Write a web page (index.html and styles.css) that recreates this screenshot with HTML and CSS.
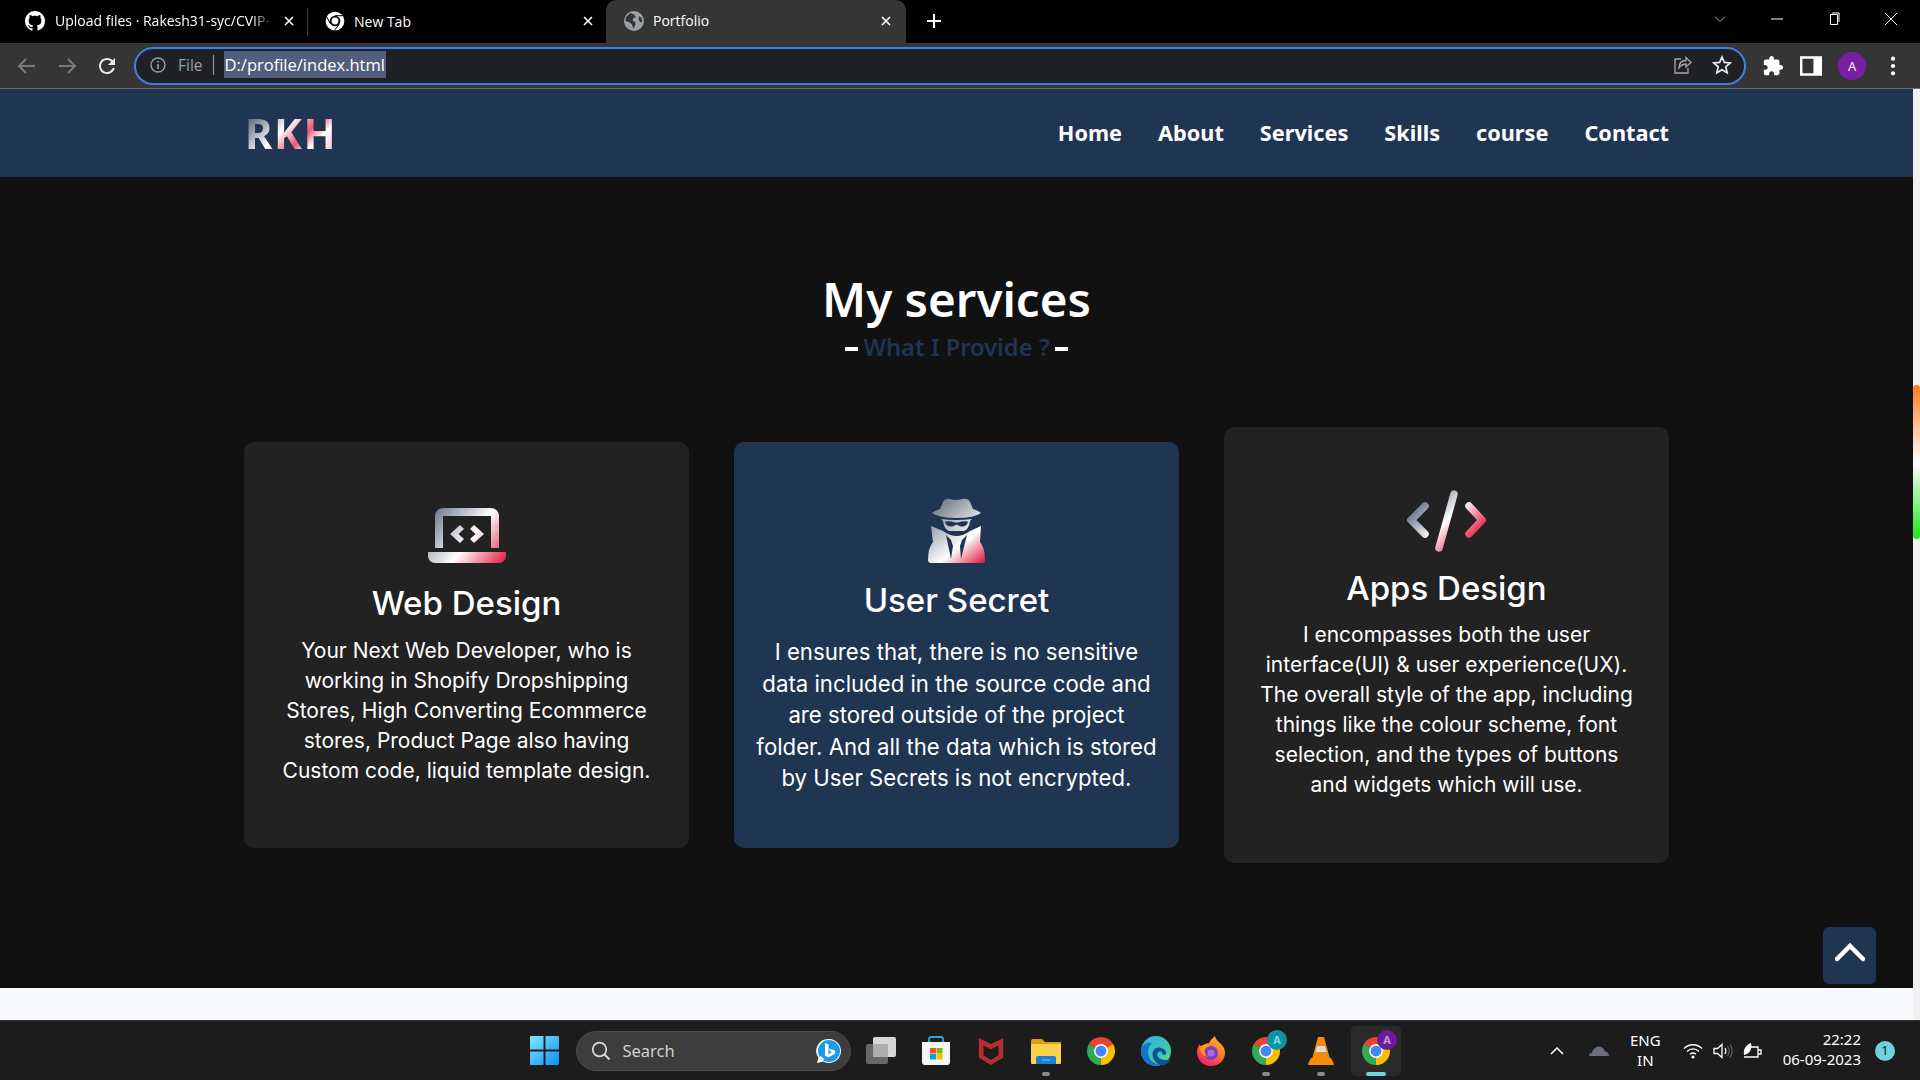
FILE: index.html
```html
<!DOCTYPE html>
<html lang="en">
<head>
    <title>Portfolio</title>
    <meta charset="utf-8" />
    <link rel="stylesheet" href="styles.css">
</head>
<body>
    <svg class="sprite" xmlns="http://www.w3.org/2000/svg">
        <symbol id="chrome" viewBox="0 0 32 32">
            <path fill="#ea4335" d="M3.01 8.5A15 15 0 0 1 28.99 8.5L16 16z"/>
            <path fill="#fbbc04" d="M28.99 8.5A15 15 0 0 1 16 31L16 16z"/>
            <path fill="#34a853" d="M16 31A15 15 0 0 1 3.01 8.5L16 16z"/>
            <circle cx="16" cy="16" r="7.4" fill="#fff"/>
            <circle cx="16" cy="16" r="5.8" fill="#4285f4"/>
        </symbol>
        <symbol id="close" viewBox="0 0 12 12">
            <path d="M2 2l8 8M10 2l-8 8" stroke="#fff" stroke-width="1.6" fill="none"/>
        </symbol>
    </svg>

    <!-- browser tabs -->
    <div class="tabstrip">
        <div class="tab">
            <svg class="favicon" viewBox="0 0 16 16"><path fill="#fff" d="M8 0C3.58 0 0 3.58 0 8c0 3.54 2.29 6.53 5.47 7.59.4.07.55-.17.55-.38 0-.19-.01-.82-.01-1.49-2.01.37-2.53-.49-2.69-.94-.09-.23-.48-.94-.82-1.13-.28-.15-.68-.52-.01-.53.63-.01 1.08.58 1.23.82.72 1.21 1.87.87 2.33.66.07-.52.28-.87.51-1.07-1.78-.2-3.64-.89-3.64-3.95 0-.87.31-1.59.82-2.15-.08-.2-.36-1.02.08-2.12 0 0 .67-.21 2.2.82.64-.18 1.32-.27 2-.27.68 0 1.36.09 2 .27 1.53-1.04 2.2-.82 2.2-.82.44 1.1.16 1.92.08 2.12.51.56.82 1.27.82 2.15 0 3.07-1.87 3.75-3.65 3.95.29.25.54.73.54 1.48 0 1.07-.01 1.93-.01 2.2 0 .21.15.46.55.38A8.013 8.013 0 0016 8c0-4.42-3.58-8-8-8z"/></svg>
            <span class="tab-title tab-fade">Upload files · Rakesh31-syc/CVIP-</span>
            <svg class="tab-close"><use href="#close"/></svg>
        </div>
        <div class="tab tab-second">
            <svg class="favicon" viewBox="0 0 32 32">
                <circle cx="16" cy="16" r="15" fill="#fff"/>
                <circle cx="16" cy="16" r="8.5" fill="#000"/>
                <circle cx="16" cy="16" r="5.5" fill="#fff"/>
                <path d="M16 7.5H30M8.6 20.5L2.5 9M22.8 21L15 31" stroke="#000" stroke-width="1.6"/>
            </svg>
            <span class="tab-title">New Tab</span>
            <svg class="tab-close"><use href="#close"/></svg>
        </div>
        <div class="tab tab-active">
            <svg class="favicon" viewBox="0 0 16 16">
                <circle cx="8" cy="8" r="8" fill="#9aa0a6"/>
                <path fill="#353535" d="M5 1.6l3 1.2 1.4 2-2 .9-.4 2 2.2 1.3-.3 2.8-1.6 2.2-1-3.4-2.4-1.8-2.7-.6.4-3.4zM12 4l2 1.600.6 3-1.800.4-1-2z"/>
            </svg>
            <span class="tab-title">Portfolio</span>
            <svg class="tab-close"><use href="#close"/></svg>
        </div>
        <svg class="new-tab" viewBox="0 0 14 14"><path d="M7 0v14M0 7h14" stroke="#fff" stroke-width="2"/></svg>
        <div class="window-controls">
            <svg class="win-btn" viewBox="0 0 14 14"><path d="M2 4.500l5 5 5-5" stroke="#aaa" fill="none"/></svg>
            <svg class="win-btn" viewBox="0 0 14 14"><path d="M1 7h12" stroke="#fff"/></svg>
            <svg class="win-btn" viewBox="0 0 14 14"><path d="M3.500 2.500h7v10h-7zM5 1h7v9" stroke="#fff" fill="none"/></svg>
            <svg class="win-btn" viewBox="0 0 14 14"><path d="M1 1l12 12M13 1L1 13" stroke="#fff" fill="none"/></svg>
        </div>
    </div>

    <!-- address bar -->
    <div class="toolbar">
        <svg class="tool-icon" viewBox="0 0 24 24"><path d="M20 12H5M11 5l-7 7 7 7" stroke="#7b7b7b" stroke-width="2" fill="none"/></svg>
        <svg class="tool-icon" viewBox="0 0 24 24"><path d="M4 12h15M13 5l7 7-7 7" stroke="#7b7b7b" stroke-width="2" fill="none"/></svg>
        <svg class="tool-icon" viewBox="0 0 24 24"><path fill="#e8eaed" d="M17.650 6.350C16.200 4.900 14.210 4 12 4c-4.420 0-7.990 3.580-7.990 8s3.570 8 7.990 8c3.730 0 6.840-2.550 7.730-6h-2.080c-.82 2.330-3.040 4-5.650 4-3.310 0-6-2.690-6-6s2.690-6 6-6c1.660 0 3.140.69 4.220 1.780L13 11h7V4l-2.350 2.350z"/></svg>
        <div class="omnibox">
            <svg class="info-icon" viewBox="0 0 16 16"><circle cx="8" cy="8" r="7" stroke="#9aa0a6" stroke-width="1.400" fill="none"/><path d="M8 7v5M8 4v1.600" stroke="#9aa0a6" stroke-width="1.600"/></svg>
            <span class="scheme">File</span>
            <span class="omni-sep"></span>
            <span class="url">D:/profile/index.html</span>
            <svg class="omni-action omni-share" viewBox="0 0 20 20"><path d="M9 4H3v14h13v-5M7 13c0-5 3-7.500 7-7.500V2.500l5 5-5 4.500V9c-3 0-5 1-7 4z" stroke="#a8a8a8" stroke-width="1.300" fill="none"/></svg>
            <svg class="omni-action" viewBox="0 0 20 20"><path d="M10 2l2.400 5.400 5.800.6-4.400 3.900 1.300 5.800L10 14.700l-5.100 3 1.300-5.800L1.800 8l5.800-.6z" stroke="#e8eaed" stroke-width="1.700" fill="none"/></svg>
        </div>
        <div class="toolbar-right">
            <svg class="ext-icon" viewBox="0 0 24 24"><path fill="#fff" d="M20.500 11H19V7c0-1.100-.9-2-2-2h-4V3.500C13 2.120 11.880 1 10.500 1S8 2.120 8 3.500V5H4c-1.100 0-1.990.9-1.990 2v3.800H3.500c1.490 0 2.700 1.210 2.700 2.700s-1.210 2.700-2.700 2.700H2V20c0 1.100.9 2 2 2h3.800v-1.500c0-1.490 1.210-2.700 2.700-2.700 1.490 0 2.700 1.210 2.700 2.700V22H17c1.100 0 2-.9 2-2v-4h1.500c1.380 0 2.500-1.120 2.500-2.500S21.880 11 20.500 11z"/></svg>
            <svg class="ext-icon" viewBox="0 0 18 18"><path fill="#fff" fill-rule="evenodd" d="M0 1h18v16H0zM2 3v12h9V3z"/></svg>
            <span class="avatar">A</span>
            <svg class="ext-icon" viewBox="0 0 18 18"><circle cx="9" cy="3" r="1.700" fill="#fff"/><circle cx="9" cy="9" r="1.700" fill="#fff"/><circle cx="9" cy="15" r="1.700" fill="#fff"/></svg>
        </div>
    </div>

    <div class="viewport">
        <div class="page">
            <nav class="navbar">
                <a class="logo">RKH</a>
                <ul class="menu">
                    <li>Home</li>
                    <li>About</li>
                    <li>Services</li>
                    <li>Skills</li>
                    <li>course</li>
                    <li>Contact</li>
                </ul>
            </nav>

            <section class="services">
                <h2 class="title">My services</h2>
                <p class="subtitle"><span class="dash"></span>What I Provide ?<span class="dash"></span></p>

                <div class="cards">
                    <div class="card card-web">
                        <svg class="icon-web" viewBox="0 0 78 55">
                            <defs><linearGradient id="grad-web" gradientUnits="userSpaceOnUse" x1="4" y1="0" x2="74" y2="56"><stop offset="0" stop-color="#657084"/><stop offset=".55" stop-color="#fff"/><stop offset="1" stop-color="#e5234c"/></linearGradient></defs>
                            <path fill="url(#grad-web)" fill-rule="evenodd" d="M7 40V8a8 8 0 0 1 8-8h48a8 8 0 0 1 8 8v32h-8V8H15v32zM0 44h78v4a7 7 0 0 1-7 7H7a7 7 0 0 1-7-7zM32 17l4 4-5.500 5 5.500 5-4 4-10-9zM46 17l10 9-10 9-4-4 5.500-5-5.500-5z"/>
                        </svg>
                        <h3 class="card-title">Web Design</h3>
                        <p class="card-text">Your Next Web Developer, who is<br>working in Shopify Dropshipping<br>Stores, High Converting Ecommerce<br>stores, Product Page also having<br>Custom code, liquid template design.</p>
                    </div>

                    <div class="card card-secret">
                        <svg class="icon-secret" viewBox="0 0 57 65">
                            <defs><linearGradient id="grad-secret" gradientUnits="userSpaceOnUse" x1="6" y1="6" x2="54" y2="64"><stop offset="0" stop-color="#6a7587"/><stop offset=".65" stop-color="#fff"/><stop offset="1" stop-color="#e5234c"/></linearGradient></defs>
                            <path fill="url(#grad-secret)" fill-rule="evenodd" d="M15 4Q17 0 22 1Q28 3 34 1Q40 0 42 4L45 11Q51 13 53 15Q46 20 28.500 20Q11 20 4 15Q6 13 12 11zM13 21Q28 23 44 21L42 23Q41 31 36 33H21Q16 31 15 23zM17 23.500Q22 22.500 27 24.500H30Q35 22.500 40 23.500Q39 29 33 28.500Q30 27.500 28.500 26.500Q27 27.500 24 28.500Q18 29 17 23.500zM3 28L15 33Q22 38 28.500 38Q35 38 42 33L53 28L52 44Q57 50 57 62Q57 65 54 65H3Q0 65 0 62Q0 50 5 44zM18 37L23 61L25 48L23 42zM39 37L34 42L32 48L33 61z"/>
                        </svg>
                        <h3 class="card-title">User Secret</h3>
                        <p class="card-text">I ensures that, there is no sensitive<br>data included in the source code and<br>are stored outside of the project<br>folder. And all the data which is stored<br>by User Secrets is not encrypted.</p>
                    </div>

                    <div class="card card-apps">
                        <svg class="icon-apps" viewBox="0 0 79 62">
                            <defs><linearGradient id="grad-apps" gradientUnits="userSpaceOnUse" x1="10" y1="5" x2="65" y2="60"><stop offset=".1" stop-color="#6a7587"/><stop offset=".5" stop-color="#fff"/><stop offset=".85" stop-color="#ec3f63"/></linearGradient></defs>
                            <path d="M18 16L4 30l14 14M47 4L32 58M62 16l13 14-13 14" fill="none" stroke="url(#grad-apps)" stroke-width="7.500" stroke-linecap="round" stroke-linejoin="miter"/>
                        </svg>
                        <h3 class="card-title">Apps Design</h3>
                        <p class="card-text">I encompasses both the user<br>interface(UI) &amp; user experience(UX).<br>The overall style of the app, including<br>things like the colour scheme, font<br>selection, and the types of buttons<br>and widgets which will use.</p>
                    </div>
                </div>
            </section>

            <div class="page-strip"></div>

            <a class="to-top"><svg viewBox="0 0 30 20"><path d="M2 17L15 4l13 13" stroke="#fff" stroke-width="4.500" fill="none" stroke-linecap="round"/></svg></a>
        </div>
        <div class="scrollbar"><div class="scroll-thumb"></div></div>
    </div>

    <!-- windows taskbar -->
    <div class="taskbar">
        <div class="task-spacer"></div>
        <div class="task-apps">
            <span class="task-item">
                <svg class="app-start" viewBox="0 0 30 30">
                    <defs><linearGradient id="grad-win" x1="0" y1="0" x2="1" y2="1"><stop offset="0" stop-color="#7fe9ff"/><stop offset="1" stop-color="#0b8ff0"/></linearGradient></defs>
                    <path fill="url(#grad-win)" d="M0 1a1 1 0 0 1 1-1h13v14H0zM16 0h13a1 1 0 0 1 1 1v13H16zM0 16h14v14H1a1 1 0 0 1-1-1zM16 16h14v13a1 1 0 0 1-1 1H16z"/>
                </svg>
            </span>
            <div class="search-pill">
                <svg class="search-icon" viewBox="0 0 20 20"><circle cx="8.500" cy="8.500" r="6.800" stroke="#ddd" stroke-width="1.700" fill="none"/><path d="M13.500 13.500l5 5" stroke="#ddd" stroke-width="1.900"/></svg>
                <span class="search-text">Search</span>
                <svg class="bing-icon" viewBox="0 0 26 26">
                    <path fill="#fff" d="M13 1a12 12 0 1 1-6 22.400L1 25l1.500-5A12 12 0 0 1 13 1z"/>
                    <circle cx="13" cy="13" r="11" fill="#1b9ae8"/>
                    <path fill="#fff" d="M1.500 24l3-6 4 3z"/>
                    <path fill="#fff" d="M9 5l3.500 1.200v10l3.500-2-2-1-1-2.800 6 2.200v3.200l-6.500 3.800L9 17.800z"/>
                </svg>
            </div>
            <span class="task-item">
                <svg class="app-icon" viewBox="0 0 30 30">
                    <rect x="0" y="8" width="22" height="20" rx="2" fill="#676767"/>
                    <rect x="7" y="1" width="23" height="20" rx="2" fill="#e6e6e6" fill-opacity=".92"/>
                    <rect x="7" y="8" width="15" height="13" fill="#adadad"/>
                </svg>
            </span>
            <span class="task-item">
                <svg class="app-icon" viewBox="0 0 30 30">
                    <path d="M8 6V3a2 2 0 0 1 2-2h10a2 2 0 0 1 2 2v3" fill="none" stroke="#2aa5df" stroke-width="1.800"/>
                    <path fill="#f5f5f5" d="M1 6h28v20a3 3 0 0 1-3 3H4a3 3 0 0 1-3-3z"/>
                    <rect x="9" y="12" width="6" height="5.500" fill="#f25022"/>
                    <rect x="15.500" y="12" width="6" height="5.500" fill="#7fba00"/>
                    <rect x="9" y="18" width="6" height="5.500" fill="#00a4ef"/>
                    <rect x="15.500" y="18" width="6" height="5.500" fill="#ffb900"/>
                </svg>
            </span>
            <span class="task-item">
                <svg class="app-icon" viewBox="0 0 30 32"><path fill="#b52f2f" fill-rule="evenodd" d="M2 2l13 6.500L28 2v21l-13 8-13-8zM7 10v10.500l8 5 8-5V10l-8 4z"/></svg>
            </span>
            <span class="task-item task-running">
                <svg class="app-icon" viewBox="0 0 30 30">
                    <path fill="#d9a20b" d="M0 5a2 2 0 0 1 2-2h9l3 3h16v6H0z"/>
                    <path fill="#fdd14e" d="M0 8h30v19a1 1 0 0 1-1 1H1a1 1 0 0 1-1-1z"/>
                    <path fill="#1c7ed6" d="M5 22a2 2 0 0 1 2-2h16a2 2 0 0 1 2 2v6H5z"/>
                    <path stroke="#7cc2f5" d="M11 24h8"/>
                </svg>
            </span>
            <span class="task-item"><svg class="app-icon"><use href="#chrome"/></svg></span>
            <span class="task-item">
                <svg class="app-icon" viewBox="0 0 30 30">
                    <defs><linearGradient id="grad-edge" x1="0" y1="0" x2="1" y2="1"><stop offset="0" stop-color="#2bb3e8"/><stop offset=".6" stop-color="#3cc4b0"/><stop offset="1" stop-color="#6fe36b"/></linearGradient></defs>
                    <circle cx="15" cy="15" r="15" fill="url(#grad-edge)"/>
                    <path fill="#1576c9" d="M0 15C0 9 6 6 11 7c-4 3-5 9-3 14 2 5 9 9 15 6-3 2-5 3-8 3C7 30 0 24 0 15z"/>
                    <path fill="#0f5394" d="M12 21c-2-5 2-11 8-9 4 1 6 4 5 6-1 1-3 1-4 0 1-2-1-3-3-2-3 1-2 6 2 7 4 2 8 1 10-1-2 5-6 8-10 7-4-1-7-4-8-8z"/>
                </svg>
            </span>
            <span class="task-item">
                <svg class="app-icon" viewBox="0 0 30 30">
                    <defs><linearGradient id="grad-fox" x1=".8" y1="0" x2=".2" y2="1"><stop offset="0" stop-color="#ffc01f"/><stop offset=".5" stop-color="#ff6b2c"/><stop offset="1" stop-color="#f0196b"/></linearGradient></defs>
                    <path fill="url(#grad-fox)" d="M15 30C7 30 1 24 1 16c0-3 1-6 3-8 0 2 1 3 2 3 2-3 4-4 7-4 1-3 4-5 6-7 0 3 3 5 6 8 3 3 4 6 4 9 0 7-6 13-14 13z"/>
                    <circle cx="15" cy="17" r="7" fill="#7b3fc4"/>
                    <circle cx="15" cy="17" r="3.500" fill="#b565e0"/>
                    <path fill="#ff9a1f" d="M4 11c3-3 8-3 11-1-3 0-5 1-6 3-1 3 0 6 3 8-5-1-8-5-8-10z"/>
                </svg>
            </span>
            <span class="task-item task-running">
                <span class="badge-wrap">
                    <svg class="app-icon"><use href="#chrome"/></svg>
                    <span class="profile-badge badge-teal">A</span>
                </span>
            </span>
            <span class="task-item task-running">
                <svg class="app-icon" viewBox="0 0 26 30">
                    <path fill="#f58a0b" d="M10 1h6l6 22h-18z"/>
                    <path fill="#dcdcdc" d="M9 10h8l1.500 6H7.500z"/>
                    <path fill="#f58a0b" d="M3 22h20l3 6a1 1 0 0 1-1 1H1a1 1 0 0 1-1-1z"/>
                </svg>
            </span>
            <span class="task-item task-active">
                <span class="badge-wrap">
                    <svg class="app-icon"><use href="#chrome"/></svg>
                    <span class="profile-badge badge-purple">A</span>
                </span>
            </span>
        </div>
        <div class="tray">
            <svg class="tray-caret" viewBox="0 0 14 8"><path d="M1 7l6-6 6 6" stroke="#fff" stroke-width="1.500" fill="none"/></svg>
            <svg class="tray-cloud" viewBox="0 0 20 10"><path fill="#6a7079" d="M0 10c0-2 1-3 3-3 1-4 4-6.500 7-6.500 3 0 5 2 6 5 2 0 4 2 4 4.500z"/></svg>
            <span class="lang">ENG<br>IN</span>
            <svg class="tray-icon" viewBox="0 0 20 16"><path d="M1 5.500c5-5 13-5 18 0M4 8.500c3.500-3.500 8.500-3.500 12 0M7 11.300c2-1.700 4-1.700 6 0" stroke="#fff" stroke-width="1.300" fill="none"/><circle cx="10" cy="14" r="1.500" fill="#fff"/></svg>
            <svg class="tray-icon" viewBox="0 0 20 16"><path d="M1 5.500h3.500L9 1.500v13l-4.500-4H1z" stroke="#fff" stroke-width="1.300" fill="none"/><path d="M12 5c1.200 2 1.200 4 0 6" stroke="#fff" stroke-width="1.200" fill="none"/><path d="M14.500 3c2 3 2 7 0 10M17 1.500c2.500 4 2.500 9 0 13" stroke="#666" stroke-width="1.100" fill="none"/></svg>
            <svg class="tray-icon" viewBox="0 0 20 16"><path d="M4 4h11v10H1" stroke="#fff" stroke-width="1.300" fill="none"/><path d="M15 7h3v4h-3" stroke="#fff" stroke-width="1.300" fill="none"/><path fill="#fff" d="M1 12C0 6 3 2 8 0c1 4 0 9-4 11z"/></svg>
            <span class="clock">22:22<br>06-09-2023</span>
            <span class="notify">1</span>
        </div>
    </div>
</body>
</html>
```

FILE: styles.css
```css
* { box-sizing: border-box; }
html, body { margin: 0; padding: 0; }
body { width: 1920px; height: 1080px; overflow: hidden; display: flex; flex-direction: column; background: #111; font-family: "Open Sans", sans-serif; }
.sprite { display: none; }

/* tabs */
.tabstrip { height: 43px; flex: none; background: #000; display: flex; align-items: center; padding-left: 8px; color: #fff; }
.tab { width: 299px; height: 43px; padding: 0 12px 2px 17px; display: flex; align-items: center; gap: 10px; font-size: 14px; }
.tab-second { border-left: 1px solid #3c3c3c; height: 28px; padding-bottom: 1px; gap: 9px; }
.tab-active { width: 300px; padding: 0 14px 2px 18px; gap: 9px; background: #353535; border-radius: 10px 10px 0 0; }
.favicon { width: 20px; height: 20px; flex: none; }
.tab-title { flex: 1; white-space: nowrap; overflow: hidden; }
.tab-fade { -webkit-mask-image: linear-gradient(to right, #000 90%, transparent); mask-image: linear-gradient(to right, #000 90%, transparent); }
.tab-close { width: 12px; height: 12px; flex: none; }
.new-tab { width: 14px; height: 14px; margin-left: 21px; margin-bottom: 2px; }
.window-controls { margin-left: auto; display: flex; gap: 43px; padding: 0 22px 6px 0; }
.win-btn { width: 14px; height: 14px; }

/* address bar */
.toolbar { height: 46px; flex: none; background: #353535; border-bottom: 1px solid #6d6d6d; display: flex; align-items: center; padding-left: 15px; gap: 16px; }
.tool-icon { width: 24px; height: 24px; flex: none; }
.omnibox { width: 1612px; height: 38px; margin-left: -1px; border: 2px solid #3f7fe6; border-radius: 19px; background: #202124; display: flex; align-items: center; padding: 0 12px 2px 14px; }
.info-icon { width: 16px; height: 16px; flex: none; }
.scheme { color: #9aa0a6; font-size: 15.5px; margin-left: 12px; }
.omni-sep { width: 1px; height: 20px; background: #9aa0a6; margin: 0 10px; }
.url { background: #515f7d; color: #fff; font-size: 16.5px; line-height: 27px; padding: 0 1px; }
.omni-action { width: 20px; height: 20px; margin-left: 20px; flex: none; }
.omni-share { margin-left: auto; }
.toolbar-right { display: flex; align-items: center; gap: 16px; }
.ext-icon { width: 22px; height: 22px; flex: none; }
.avatar { width: 28px; height: 28px; border-radius: 50%; background: #7b1fa2; color: #fff; font-size: 13px; display: flex; align-items: center; justify-content: center; }

/* page */
.viewport { height: 931px; flex: none; display: flex; }
.page { flex: 1; position: relative; display: flex; flex-direction: column; }
.scrollbar { width: 7px; background: #f1f1f1; padding-top: 296px; }
.scroll-thumb { height: 154px; border-radius: 4px; background: linear-gradient(#ff7a1a, #fff 50%, #1ae81a); }

.navbar { height: 88px; flex: none; background: #1f3552; display: flex; align-items: center; justify-content: space-between; padding: 0 244px 0 245px; }
.logo { font-family: "Noto Sans", sans-serif; font-size: 42px; font-weight: 700; letter-spacing: 1.5px; padding-bottom: 2px; background: linear-gradient(135deg, #6a7587 15%, #fff 42%, #ee5575 60%, #fff 72%, #f7c0cc 90%); -webkit-background-clip: text; background-clip: text; color: transparent; }
.menu { list-style: none; margin: 0; padding: 0 0 2px; display: flex; gap: 36px; }
.menu li { color: #fff; font-family: "Noto Sans", sans-serif; font-size: 21.7px; font-weight: 700; }

.services { flex: 1; background: #111; padding: 92px 244px 0; }
.title { margin: 0; text-align: center; color: #fff; font-family: "Noto Sans", sans-serif; font-size: 47.5px; font-weight: 600; line-height: 60px; }
.subtitle { margin: 0; display: flex; justify-content: center; align-items: center; gap: 5px; color: #1f3552; font-family: "Noto Sans", sans-serif; font-size: 23.7px; font-weight: 600; line-height: 36px; }
.dash { width: 13px; height: 4px; background: #fff; margin-top: 3px; }

.cards { margin-top: 62px; display: grid; grid-template-columns: repeat(3, 445px); column-gap: 45px; align-items: center; }
.card { background: #222; border-radius: 10px; text-align: center; color: #fff; display: flex; flex-direction: column; align-items: center; font-family: Inter, sans-serif; font-size: 21px; line-height: 30px; }
.card-title { margin: 0; font-size: 33px; font-weight: 500; line-height: 40px; }
.card-text { margin: 0; white-space: nowrap; }

.card-web { height: 406px; padding-top: 66px; }
.icon-web { width: 78px; height: 55px; margin-bottom: 20px; }
.card-web .card-title { margin-bottom: 13px; }

.card-secret { height: 406px; padding-top: 56px; background: #1f3552; font-size: 22.2px; line-height: 31.5px; }
.icon-secret { width: 57px; height: 65px; margin-bottom: 17px; }
.card-secret .card-title { margin-bottom: 16px; }

.card-apps { height: 436px; padding-top: 63px; }
.icon-apps { width: 79px; height: 62px; margin-bottom: 16px; }
.card-apps .card-title { margin-bottom: 12px; }

.page-strip { height: 32px; flex: none; background: #f8fafe; }
.to-top { position: absolute; right: 37px; bottom: 36px; width: 53px; height: 57px; background: #1f3552; border-radius: 6px; display: flex; align-items: center; justify-content: center; padding-bottom: 8px; }
.to-top svg { width: 30px; height: 20px; }

/* taskbar */
.taskbar { height: 60px; flex: 1; background: #1c1c1c; border-top: 1px solid #333; display: grid; grid-template-columns: 1fr auto 1fr; align-items: center; color: #fff; }
.task-apps { display: flex; align-items: center; }
.task-item { width: 55px; height: 50px; display: flex; align-items: center; justify-content: center; position: relative; border-radius: 5px; }
.task-running::after, .task-active::after { content: ""; position: absolute; bottom: 0; left: 50%; width: 8px; height: 4px; margin-left: -4px; border-radius: 2px; background: #8a8a8a; }
.task-active { width: 50px; margin: 0 2.5px; background: #2a2a2a; }
.task-active::after { width: 20px; margin-left: -10px; background: #6fd3dc; }
.app-start { width: 29px; height: 29px; }
.app-icon { width: 30px; height: 30px; display: block; }
.search-pill { width: 275px; height: 40px; margin: 0 3px 0 4px; border-radius: 20px; background: #3d3d3d; border: 1px solid #4a4a4a; display: flex; align-items: center; padding: 0 8px 0 14px; }
.search-icon { width: 20px; height: 20px; flex: none; }
.search-text { margin-left: 12px; color: #d0d0d0; font-family: "Noto Sans", sans-serif; font-size: 16.5px; flex: 1; }
.bing-icon { width: 26px; height: 26px; flex: none; }
.badge-wrap { position: relative; display: block; }
.profile-badge { position: absolute; top: -6px; right: -6px; width: 20px; height: 20px; border-radius: 50%; font-size: 11px; font-weight: 700; line-height: 20px; text-align: center; }
.badge-teal { background: #0e93a5; color: #8ed4dd; }
.badge-purple { background: #6a1b9a; color: #c39ad8; }

.tray { display: flex; align-items: center; justify-content: flex-end; padding-right: 25px; font-family: "Noto Sans", sans-serif; font-size: 15px; line-height: 20px; }
.tray-caret { width: 14px; height: 8px; margin-right: 25px; }
.tray-cloud { width: 20px; height: 10px; margin-right: 21px; }
.lang { text-align: center; margin-right: 22px; padding-bottom: 2px; }
.tray-icon { width: 20px; height: 16px; margin-right: 10px; }
.clock { text-align: right; margin-left: 10px; padding-bottom: 3px; }
.notify { width: 20px; height: 20px; margin-left: 14px; border-radius: 50%; background: #6fd3dc; color: #111; font-size: 12px; text-align: center; }
```
